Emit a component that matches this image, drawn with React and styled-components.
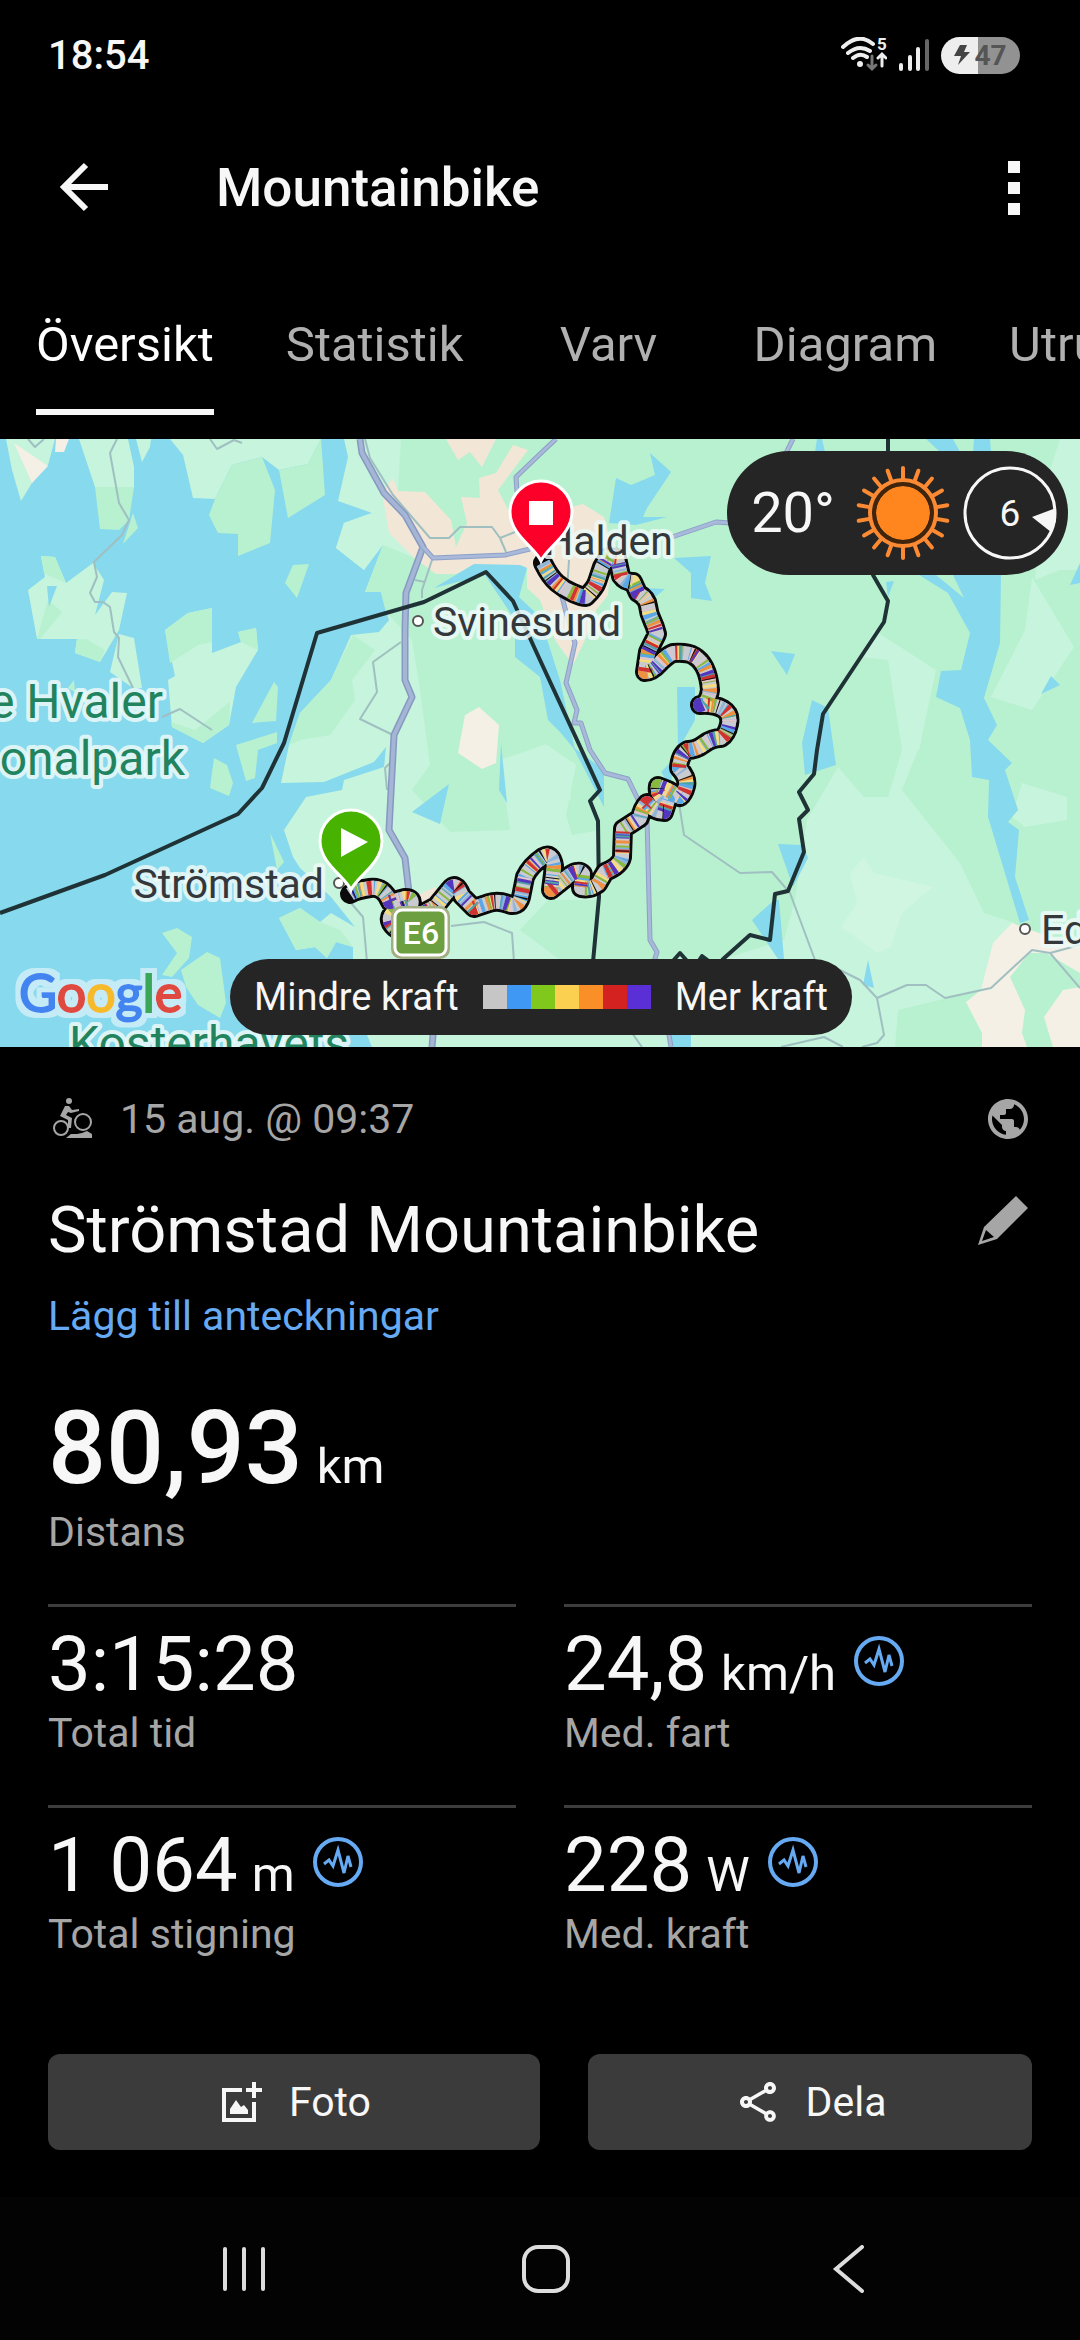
import React from 'react';
import styled, { createGlobalStyle } from 'styled-components';
import { MdPublic, MdOutlineShare } from 'react-icons/md';

const GlobalStyle = createGlobalStyle`
   * {
      box-sizing: border-box;
   }
   body {
      margin: 0;
      background: #000;
      color: #f7f7f7;
      font-family: Roboto, sans-serif;
   }
   button {
      border: 0;
      padding: 0;
      background: none;
      color: inherit;
      font: inherit;
   }
`;

const Screen = styled.div`
   display: flex;
   flex-direction: column;
   min-height: 100vh;
   overflow: hidden;
`;

const Icon = styled.svg`
   display: block;
   flex: none;
`;

/* status bar */

const StatusBar = styled.div`
   display: flex;
   align-items: center;
   justify-content: space-between;
   height: 110px;
   padding: 0 60px 0 48px;
`;

const Clock = styled.div`
   font-size: 40px;
   font-weight: 500;
`;

const StatusIcons = styled.div`
   display: flex;
   align-items: center;
   gap: 12px;
`;

const Battery = styled.div`
   display: flex;
   align-items: center;
   justify-content: center;
   gap: 4px;
   width: 79px;
   height: 37px;
   border-radius: 19px;
   background: linear-gradient(90deg, #eee 47%, #929292 47%);
   color: #555;
   font-size: 28px;
   font-weight: 700;
`;

/* header */

const Header = styled.header`
   display: flex;
   align-items: center;
   height: 156px;
   padding: 0 48px;
`;

const Title = styled.h1`
   flex: 1;
   margin: 0 0 0 96px;
   font-size: 53px;
   font-weight: 500;
`;

const Tabs = styled.nav`
   display: flex;
   padding-bottom: 24px;
   overflow: hidden;
`;

const Tab = styled.button`
   display: flex;
   flex: none;
   justify-content: center;
   min-width: 218px;
   padding: 0 36px;
   font-size: 49px;
   line-height: 56px;
   color: ${p => p.$active ? '#fff' : '#b0b0b0'};
`;

const TabLabel = styled.span`
   height: 149px;
   padding-top: 51px;
   border-bottom: 6px solid ${p => p.$active ? '#f7f7f7' : 'transparent'};
`;

/* map */

const MapBox = styled.section`
   position: relative;
`;

const MapSvg = styled.svg`
   display: block;
   width: 100%;
`;

const Place = styled.text`
   font-family: Roboto, sans-serif;
   font-size: ${p => p.$park ? 48 : 41}px;
   fill: ${p => p.$park ? '#22845f' : '#34383b'};
   stroke: #eefaf8;
   stroke-opacity: 0.85;
   stroke-width: 8px;
   stroke-linejoin: round;
   paint-order: stroke;
`;

const Brand = styled.text`
   font-family: Lato, sans-serif;
   font-size: 52px;
   stroke-width: 2px;
`;

const RoadSign = styled.text`
   font-family: Roboto, sans-serif;
   font-size: 32px;
   font-weight: 500;
   fill: #fff;
   text-anchor: middle;
`;

const Weather = styled.div`
   position: absolute;
   top: 12px;
   right: 12px;
   display: flex;
   align-items: center;
   height: 124px;
   padding: 0 11px 0 24px;
   border-radius: 62px;
   background: #252525;
   font-size: 56px;
`;

const Sun = styled(Icon)`
   margin: 0 12px 0 20px;
`;

const WindText = styled.text`
   font-family: Roboto, sans-serif;
   font-size: 37px;
   fill: #f7f7f7;
   text-anchor: middle;
`;

const Legend = styled.div`
   position: absolute;
   bottom: 12px;
   left: 230px;
   display: flex;
   align-items: center;
   gap: 24px;
   height: 76px;
   padding: 0 24px;
   border-radius: 38px;
   background: #252525;
   font-size: 38px;
   white-space: nowrap;
`;

const Scale = styled.div`
   display: flex;
`;

const Swatch = styled.span`
   width: 24px;
   height: 24px;
   background: ${p => p.$color};
`;

/* activity details */

const Details = styled.main`
   padding: 40px 48px 47px;
`;

const MetaRow = styled.div`
   display: flex;
   align-items: center;
   height: 64px;
   font-size: 41px;
   color: #a6a6a6;
`;

const When = styled.time`
   flex: 1;
   margin-left: 24px;
`;

const NameRow = styled.div`
   display: flex;
   align-items: flex-start;
   justify-content: space-between;
   margin-top: 39px;
`;

const Name = styled.h2`
   margin: 0;
   font-size: 65px;
   font-weight: 400;
   line-height: 80px;
`;

const IconButton = styled.button`
   padding: 6px 4px 0 0;
`;

const NotesLink = styled.a`
   display: block;
   margin: 22px 0 48px;
   font-size: 41px;
   line-height: 48px;
   color: #66aaf4;
   text-decoration: none;
`;

const Stat = styled.div`
   ${p => p.$divided && 'padding-top: 12px; border-top: 3px solid #3d3d3d;'}
`;

const StatValue = styled.div`
   display: flex;
   align-items: baseline;
   gap: 14px;
   height: ${p => p.$large ? 120 : 90}px;
   font-size: ${p => p.$large ? 102 : 76}px;
   font-weight: ${p => p.$large ? 500 : 400};
   line-height: ${p => p.$large ? 120 : 90}px;
`;

const Unit = styled.span`
   font-size: 49px;
   font-weight: 400;
   line-height: 56px;
`;

const StatLabel = styled.div`
   font-size: 41px;
   line-height: 48px;
   color: #a6a6a6;
`;

const StatGrid = styled.div`
   display: grid;
   grid-template-columns: 1fr 1fr;
   gap: 48px;
   margin-top: 48px;
`;

const ChartButton = styled.button`
   align-self: flex-start;
   margin: 17px 0 0 4px;
`;

const Actions = styled.div`
   display: grid;
   grid-template-columns: 41fr 37fr;
   gap: 48px;
   margin-top: 96px;
`;

const ActionButton = styled.button`
   display: flex;
   align-items: center;
   justify-content: center;
   gap: 24px;
   height: 96px;
   border-radius: 12px;
   background: #3b3b3b;
   font-size: 41px;
`;

/* system navigation */

const SystemNav = styled.nav`
   display: flex;
   flex: 1;
   min-height: 143px;
   padding: 0 80px 0 92px;
   background: #030303;
`;

const SystemButton = styled.button`
   display: flex;
   flex: 1;
   align-items: center;
   justify-content: center;
`;

const LEGEND = ['#c6c6c6', '#4098f5', '#80c91c', '#fbd050', '#fa8f27', '#d42220', '#5a30d6'];

const TABS = ['Översikt', 'Statistik', 'Varv', 'Diagram', 'Utrustning'];

const STATS = [
   { value: '3:15:28', label: 'Total tid' },
   { value: '24,8', unit: 'km/h', label: 'Med. fart', chart: true },
   { value: '1 064', unit: 'm', label: 'Total stigning', chart: true },
   { value: '228', unit: 'W', label: 'Med. kraft', chart: true },
];

const ISLANDS = [
   '6,439 12,470 21,501 32,483 48,465 55,439',
   '79,439 95,487 134,487 134,467 128,439',
   '136,439 142,462 150,447 151,439',
   '170,439 183,455 193,498 215,499 232,465 262,457 279,470 308,464 321,439',
   '41,556 55,557 66,583 93,563 104,580 95,615 112,592 127,593 119,630 100,662 75,653 77,639 37,639 28,590 45,577',
   '119,634 134,638 142,688 133,688 110,672',
   '165,630 188,613 212,608 212,653 241,642 238,632 256,628 258,650 236,687 229,725 203,743 172,727 168,680 175,676',
];

const DARK_ISLANDS = [
   '95,487 100,529 119,530 129,520 134,487',
   '215,499 232,465 262,457 275,490 270,543 238,556 238,534 218,533 209,515',
   '279,470 308,464 321,439 325,495 288,518',
   '133,513 138,528 123,544',
   '165,630 188,613 212,608 212,642 198,645 170,663',
   '241,642 238,632 256,628 258,650',
   '171,722 195,730 230,702 229,725 203,743 172,727',
   '41,556 55,557 66,583 52,577 44,573',
   '77,639 86,639 105,650 100,662 75,653',
   '48,600 62,612 40,639 37,639',
   '293,565 309,564 297,598 285,583',
   '274,682 278,687 276,721 252,723',
   '236,745 277,732 277,743 258,750 255,778 246,781',
   '214,758 227,765 233,783 229,796 210,788',
   '270,833 284,862 277,870',
   '162,933 177,928 192,937 189,958 172,977 162,975 177,953',
   '181,970 207,952 220,958 226,1003 220,1018 198,1005 186,987',
   '68,688 74,680 75,692',
];

const MAINLAND = '344,439 348,457 338,501 372,513 344,523 336,548 364,570 383,545 365,592 381,592 386,612 389,620 379,632 351,635 331,680 300,713 289,745 281,783 324,782 374,762 386,747 384,767 344,780 342,790 306,797 284,830 293,857 300,868 331,897 355,927 331,913 320,922 300,908 279,918 296,950 315,947 327,958 336,942 353,947 353,960 367,1035 372,1047 1080,1047 1080,439';

const FOREST = [
   '401,439 1080,439 1080,1047 895,1047 860,1047 700,1047 560,960 520,930 548,900 600,900 600,830 572,835 566,815 576,765 546,744 500,760 510,830 450,832 412,790 430,765 420,690 412,640 386,612 381,592 365,592 383,545 420,560 398,491',
   '353,635 375,650 352,680 355,700 330,735 300,740 289,745 300,713 331,680',
   '279,918 300,908 320,922 340,930 353,947 336,942 327,958 315,947 296,950',
];

const MEADOWS = [
   '874,630 936,670 919,750 902,750 888,660 860,657',
   '838,767 864,797 888,797 905,740 922,740 902,790 960,863 984,913 1015,923 981,990 898,1010 895,1047 700,1047 720,960 784,940 795,900 807,820',
   '1032,577 1056,617 1074,647 1032,710 991,697 1025,630',
   '1060,439 1080,439 1080,570 1060,570 1035,580 1040,500',
   '1022,783 1067,797 1067,820 1025,827 1012,817',
   '372,1047 372,960 570,1035 740,1030 740,1047',
   '548,758 574,762 570,800 545,800',
   '336,548 344,523 372,513 389,533 364,570',
];

const URBAN = [
   '393,478 398,491 425,492 451,520 456,547 467,523 461,497 480,498 479,478 496,473 513,445 528,450 498,490 517,527 540,520 560,510 583,504 604,517 612,545 608,595 596,610 585,640 573,665 555,640 540,600 527,588 527,568 520,565 474,565 456,574 436,574 413,557 389,533 382,493',
   '446,439 458,460 470,452 482,467 496,439',
   '418,895 435,887 450,900 440,910 415,908',
];

const BARE = [
   '1012,923 1039,933 1080,947 1080,973 1046,953 1029,953 1010,977 1025,1010 1022,1033 1027,1047 982,1047 982,1033 966,1002 981,990 993,943',
   '1080,987 1063,990 1044,1017 1053,1047 1080,1047',
   '465,715 479,707 499,725 496,763 482,769 458,753',
   '14,443 48,466 32,483',
   '55,452 64,452 69,439 56,439',
];

const LAKES = [
   '474,564 520,565 527,568 519,597 540,617 560,680 575,750 560,732 548,720 540,677 515,657 515,620 485,575 434,588',
   '573,747 604,770 604,807 590,780',
   '650,453 671,472 647,508 643,517 667,517 636,525 609,523 616,478 631,485 655,475',
   '674,558 711,556 705,583 712,601 691,598 691,573',
   '643,588 665,589 654,598',
   '771,651 795,654 787,675',
   '677,687 695,687 695,720 678,750',
   '661,772 673,760 671,787',
   '812,700 828,708 836,765 805,775 802,743',
   '919,575 936,575 964,598 953,575 1001,575 1000,643 984,698 997,725 988,740 1012,763 1005,770 1018,810 1008,822 1019,830 1015,877 1029,920 1020,923 988,817 989,780 972,777 970,740 960,708 936,697 941,671 961,670 970,633 948,593',
   '926,439 953,439 960,452 940,452',
   '974,439 990,439 991,452 973,452',
   '817,439 822,439 825,452 815,452',
   '1051,676 1060,685 1041,694',
   '1080,563 1080,583 1070,585',
   '886,582 894,581 888,597',
   '778,844 803,845 808,858 793,887',
   '774,900 779,900 784,959 778,959 752,920',
   '868,960 874,988 863,985',
   '671,1035 691,1035 691,1047 673,1047',
   '449,784 440,824 412,812',
   '501,743 507,803 499,790',
   '47,586 57,586 49,607',
];

const HIGHWAYS = [
   '360,439 362,453 384,493 405,515 423,547 406,593 405,630 405,680 412,697 394,735 389,830 405,858 409,893 425,960 433,1035 432,1047',
];

const ROADS = [
   '423,547 433,558 505,555 530,549',
   '556,439 540,454 516,477 517,492',
   '793,439 786,453',
   '672,537 716,522 730,523',
   '561,593 566,612 575,643 566,683 577,710 574,723 581,723 590,750 605,773 628,779 647,818 650,940 657,952 654,962 669,1035 671,1047',
];

const LANES = [
   '117,439 110,453 119,503 129,520 122,535 94,562 97,577 90,593 95,602 103,602 110,607 114,632 119,638 118,657 133,688',
   '162,717 180,709 212,730',
   '210,439 217,449 234,440 242,443',
   '28,439 35,447 44,439',
   '365,439 370,458 393,495 430,538 449,538 460,527 492,527 500,538 515,532',
   '500,538 506,552',
   '432,560 422,590 422,598',
   '415,580 425,582',
   '401,642 373,662 377,692 360,719 393,735',
   '391,762 385,768 387,790',
   '351,903 363,917 367,962',
   '451,926 484,922 512,933 514,962',
   '679,803 684,835 740,873 772,872 790,893 815,960 840,970 860,980 877,998 907,985 926,985 945,998 991,988 1032,950 1050,953 1080,988',
   '877,998 884,1035 877,1043 862,1047',
   '781,1047 824,1037 843,1047',
   '1050,953 1080,945',
   '632,1033 642,1047',
   '569,560 567,590',
];

const BORDERS = [
   '0,913 105,875 238,814 262,788 284,743 317,633 424,602 486,572 513,601 540,660 577,740 600,790 590,801 598,821 599,897 593,962',
   '888,439 888,500 873,575 888,601 884,622 823,714 817,750 814,774 799,792 808,810 799,819 804,852 788,891 775,894 770,940 750,935 722,960',
   '672,962 680,953 688,962',
   '698,962 702,956 710,962',
];

const TRACK = 'M543 563Q550 577 557 583T573 593T586 597Q595 588 597 582T602 567L608 557L617 558L621 576Q625 582 633 582L638 593Q647 598 648 606T652 620T657 634L648 652L645 672Q652 672 659 664T673 653Q688 652 694 656Q708 664 710 690Q708 704 700 705Q714 704 723 709Q731 714 729 724T721 738Q712 738 704 744T688 750Q680 754 679 768Q688 778 686 786T680 797L668 790L658 786Q656 796 668 800L664 812Q655 812 647 803Q642 808 640 818L623 829L622 857Q620 866 605 872L598 884Q590 890 581 888L583 874Q578 868 566 878L551 890L554 866Q552 852 543 857Q530 866 525 877L521 897Q518 908 508 904T489 903T474 908L462 896Q456 880 449 890L436 906L395 928Q384 918 396 911L411 905Q414 898 405 898L390 902Q384 886 370 888T350 894';

const TRACK_BANDS = [
   ['#8fb5d8', '3 13 2 9'],
   ['#f3dc82', '3 12 4 15'],
   ['#5ba8e8', '2 17 4 11 1 9'],
   ['#88b83c', '3 23 2 17 2 14'],
   ['#ee9040', '3 29 2 17 3 19'],
   ['#e3c4c9', '2 11 1 19'],
   ['#cf3230', '3 23 4 37 2 16'],
   ['#5336bd', '4 41 2 19 4 31'],
   ['#4fa3a5', '2 37 1 28'],
   ['#111', '1 47 1 29'],
];

const Polygons = ({ shapes, fill }) => (
   <g fill={fill}>
      {shapes.map(points => <polygon key={points} points={points} />)}
   </g>
);

const Lines = ({ shapes, color, width }) => (
   <g fill="none" stroke={color} strokeWidth={width} strokeLinejoin="round">
      {shapes.map(points => <polyline key={points} points={points} />)}
   </g>
);

const Town = ({ x, y }) => (
   <circle cx={x} cy={y} r="5" fill="#fff" stroke="#555" strokeWidth="2" />
);

const Pin = ({ x, y, color, children }) => (
   <g transform={`translate(${x} ${y})`}>
      <path
         d="M0 0C-5 -13 -31 -26 -31 -49A31 31 0 0 1 31 -49C31 -26 5 -13 0 0Z"
         fill={color}
         stroke="#fff"
         strokeWidth="3"
      />
      {children}
   </g>
);

const GOOGLE = [['G', '#4384f0'], ['o', '#e04a3f'], ['o', '#f6bb2a'], ['g', '#4384f0'], ['l', '#3aa757'], ['e', '#e04a3f']];

const RouteMap = () => (
   <MapSvg viewBox="0 439 1080 608" role="img" aria-label="Karta">
      <defs>
         <filter id="halo" x="-10%" y="-20%" width="120%" height="140%">
            <feMorphology in="SourceAlpha" operator="dilate" radius="5" result="wide" />
            <feFlood floodColor="#c5ecf6" />
            <feComposite in2="wide" operator="in" />
            <feMerge>
               <feMergeNode />
               <feMergeNode in="SourceGraphic" />
            </feMerge>
         </filter>
      </defs>
      <rect y="439" width="1080" height="608" fill="#87d9ed" />
      <Polygons shapes={[...ISLANDS, MAINLAND]} fill="#c6f4dc" />
      <Polygons shapes={[...DARK_ISLANDS, ...FOREST]} fill="#b8f1d0" />
      <Polygons shapes={MEADOWS} fill="#c6f4dc" />
      <polygon
         points="864,857 874,873 933,887 902,913 891,947 877,953 841,927 857,903 850,873"
         fill="#d0f6e2"
      />
      <Polygons shapes={URBAN} fill="#f2e6d7" />
      <Polygons shapes={BARE} fill="#f4f0e5" />
      <Polygons shapes={LAKES} fill="#87d9ed" />
      <Lines shapes={LANES} color="#a0bfc1" width="2" />
      <Lines shapes={HIGHWAYS} color="#8799c0" width="7" />
      <Lines shapes={HIGHWAYS} color="#a5b5d6" width="4" />
      <Lines shapes={ROADS} color="#8da0c6" width="5" />
      <Lines shapes={ROADS} color="#a9b9da" width="3" />
      <Lines shapes={BORDERS} color="#1f3236" width="4" />
      <Town x="339" y="883" />
      <g fill="none" strokeLinejoin="round">
         <path d={TRACK} stroke="#0a0a0a" strokeWidth="20" strokeLinecap="round" />
         <path d={TRACK} stroke="#c9cbd0" strokeWidth="14" />
         {TRACK_BANDS.map(([color, dash], i) => (
            <path
               key={color}
               d={TRACK}
               stroke={color}
               strokeWidth="14"
               strokeDasharray={dash}
               strokeDashoffset={i * 7}
            />
         ))}
      </g>
      <Town x="418" y="621" />
      <Town x="1025" y="929" />
      <Place $park x="163" y="718" textAnchor="end">e Hvaler</Place>
      <Place $park x="185" y="775" textAnchor="end">onalpark</Place>
      <Place $park x="69" y="1060">Kosterhavets</Place>
      <Place x="433" y="636">Svinesund</Place>
      <Place x="673" y="555" textAnchor="end">Halden</Place>
      <Place x="324" y="898" textAnchor="end">Strömstad</Place>
      <Place x="1041" y="944">Ed</Place>
      <Brand x="19" y="1012" filter="url(#halo)">
         {GOOGLE.map(([letter, color], i) => (
            <tspan key={i} fill={color} stroke={color}>{letter}</tspan>
         ))}
      </Brand>
      <rect x="391" y="906" width="59" height="53" rx="10" fill="#a3ae83" />
      <rect x="395" y="910" width="51" height="45" rx="7" fill="#6b9f40" stroke="#fff" strokeWidth="3" />
      <RoadSign x="421" y="944">E6</RoadSign>
      <Pin x="351" y="890" color="#47b300">
         <path d="M-10 -62V-33L17 -48Z" fill="#fff" />
      </Pin>
      <Pin x="541" y="561" color="#fd0029">
         <rect x="-12" y="-60" width="24" height="24" fill="#fff" />
      </Pin>
   </MapSvg>
);

const RAYS = Array.from({ length: 18 }, (_, i) => i * 20);

const App = () => (
   <Screen>
      <GlobalStyle />
      <StatusBar>
         <Clock>18:54</Clock>
         <StatusIcons>
            <Icon width="46" height="36" viewBox="0 0 46 36" fill="none" stroke="#eee" strokeWidth="4" strokeLinecap="round">
               <path d="M2 10Q18 -5 32 7M7 16Q18 7 29 14M12 21Q19 15 26 20" />
               <circle cx="19" cy="27" r="3" fill="#eee" stroke="none" />
               <path d="M31 19V31M27 28L31 32L35 28" stroke="#777" strokeWidth="3" />
               <path d="M41 29V18M37 21L41 17L45 21" strokeWidth="3" />
               <text x="36" y="13" fill="#eee" stroke="none" fontSize="17" fontWeight="700">5</text>
            </Icon>
            <Icon width="30" height="36" viewBox="0 0 30 36" fill="none" stroke="#eee" strokeWidth="4" strokeLinecap="round">
               <path d="M2 28V32M11 20V32M19 12V32" />
               <path d="M28 4V32" stroke="#666" />
            </Icon>
            <Battery>
               <Icon width="16" height="20" viewBox="0 0 16 20">
                  <path d="M6 0H13L10 7H16L4 20L7 11H0Z" fill="#444" />
               </Icon>
               47
            </Battery>
         </StatusIcons>
      </StatusBar>

      <Header>
         <button type="button" aria-label="Tillbaka">
            <Icon width="72" height="72" viewBox="0 0 72 72" fill="none" stroke="#f7f7f7" strokeWidth="6">
               <path d="M60 35H16M38 13L16 35L38 57" />
            </Icon>
         </button>
         <Title>Mountainbike</Title>
         <button type="button" aria-label="Meny">
            <Icon width="36" height="54" viewBox="0 0 36 54" fill="#f7f7f7">
               <path d="M12 0H24V12H12ZM12 21H24V33H12ZM12 42H24V54H12Z" />
            </Icon>
         </button>
      </Header>

      <Tabs>
         {TABS.map((tab, i) => (
            <Tab key={tab} type="button" $active={i === 0}>
               <TabLabel $active={i === 0}>{tab}</TabLabel>
            </Tab>
         ))}
      </Tabs>

      <MapBox>
         <RouteMap />
         <Weather>
            20°
            <Sun width="96" height="96" viewBox="-48 -48 96 96">
               <circle r="27" fill="#ff851f" />
               <circle r="29" fill="none" stroke="#40240c" strokeWidth="4" />
               <circle r="33" fill="none" stroke="#fb8a33" strokeWidth="4" />
               {RAYS.map(angle => (
                  <path
                     key={angle}
                     d="M0 -34V-45"
                     stroke="#fb8a33"
                     strokeWidth="4"
                     strokeLinecap="round"
                     transform={`rotate(${angle})`}
                  />
               ))}
            </Sun>
            <Icon width="94" height="94" viewBox="-47 -47 94 94">
               <circle r="45" fill="none" stroke="#f7f7f7" strokeWidth="3" />
               <path d="M22 4L46 -5L46 8L41 19Z" fill="#f7f7f7" />
               <WindText y="13">6</WindText>
            </Icon>
         </Weather>
         <Legend>
            Mindre kraft
            <Scale>
               {LEGEND.map(color => <Swatch key={color} $color={color} />)}
            </Scale>
            Mer kraft
         </Legend>
      </MapBox>

      <Details>
         <MetaRow>
            <Icon width="48" height="48" viewBox="0 0 48 48" fill="none" stroke="#a6a6a6">
               <circle cx="13" cy="33" r="7" strokeWidth="2" />
               <circle cx="35" cy="27" r="8" strokeWidth="2" />
               <circle cx="21" cy="6" r="3" fill="#a6a6a6" stroke="none" />
               <path d="M12 21L17 11L21 11L24 15L31 14L31 16L23 18L20 17L18 20L24 23L23 33L20 33L20 25Z" fill="#a6a6a6" stroke="none" />
               <path d="M18 43L23 39H29L34 38L39 36L44 39V43Z" fill="#a6a6a6" stroke="none" />
            </Icon>
            <When>15 aug. @ 09:37</When>
            <MdPublic size={48} />
         </MetaRow>
         <NameRow>
            <Name>Strömstad Mountainbike</Name>
            <IconButton type="button" aria-label="Redigera">
               <Icon width="50" height="50" viewBox="0 0 50 50">
                  <path d="M38 0L50 12L19 43L0 49L6 31ZM8 34L4 45L16 41Z" fill="#a6a6a6" fillRule="evenodd" />
               </Icon>
            </IconButton>
         </NameRow>
         <NotesLink href="#notes">Lägg till anteckningar</NotesLink>

         <Stat>
            <StatValue $large>
               80,93
               <Unit>km</Unit>
            </StatValue>
            <StatLabel>Distans</StatLabel>
         </Stat>
         <StatGrid>
            {STATS.map(({ value, unit, label, chart }) => (
               <Stat key={label} $divided>
                  <StatValue>
                     {value}
                     {unit && <Unit>{unit}</Unit>}
                     {chart && (
                        <ChartButton type="button" aria-label={`Visa diagram, ${label}`}>
                           <Icon width="50" height="50" viewBox="0 0 50 50" fill="none" stroke="#66aaf4">
                              <circle cx="25" cy="25" r="23" strokeWidth="4" />
                              <path d="M11 27L16 23L20 29L25 13L31 36L35 19L38 30" strokeWidth="3" />
                           </Icon>
                        </ChartButton>
                     )}
                  </StatValue>
                  <StatLabel>{label}</StatLabel>
               </Stat>
            ))}
         </StatGrid>

         <Actions>
            <ActionButton type="button">
               <Icon width="48" height="48" viewBox="0 0 48 48" fill="#f7f7f7">
                  <path d="M5 10H25V14H9V40H35V24H39V44H5ZM35 4H39V10H45V14H39V20H35V14H29V10H35Z" />
                  <path d="M13 36V31L19 22L24 29L27 27L31 32V36Z" />
               </Icon>
               Foto
            </ActionButton>
            <ActionButton type="button">
               <MdOutlineShare size={48} />
               Dela
            </ActionButton>
         </Actions>
      </Details>

      <SystemNav>
         <SystemButton type="button" aria-label="Senaste appar">
            <Icon width="48" height="48" viewBox="0 0 48 48" stroke="#ddd" strokeWidth="4" strokeLinecap="round">
               <path d="M6 4V44M25 4V44M44 4V44" />
            </Icon>
         </SystemButton>
         <SystemButton type="button" aria-label="Hem">
            <Icon width="48" height="48" viewBox="0 0 48 48" fill="none" stroke="#ddd" strokeWidth="4">
               <rect x="2" y="2" width="44" height="44" rx="14" />
            </Icon>
         </SystemButton>
         <SystemButton type="button" aria-label="Tillbaka">
            <Icon width="48" height="48" viewBox="0 0 48 48" fill="none" stroke="#ddd" strokeWidth="4" strokeLinecap="round">
               <path d="M37 2L11 24L37 46" />
            </Icon>
         </SystemButton>
      </SystemNav>
   </Screen>
);

export default App;
